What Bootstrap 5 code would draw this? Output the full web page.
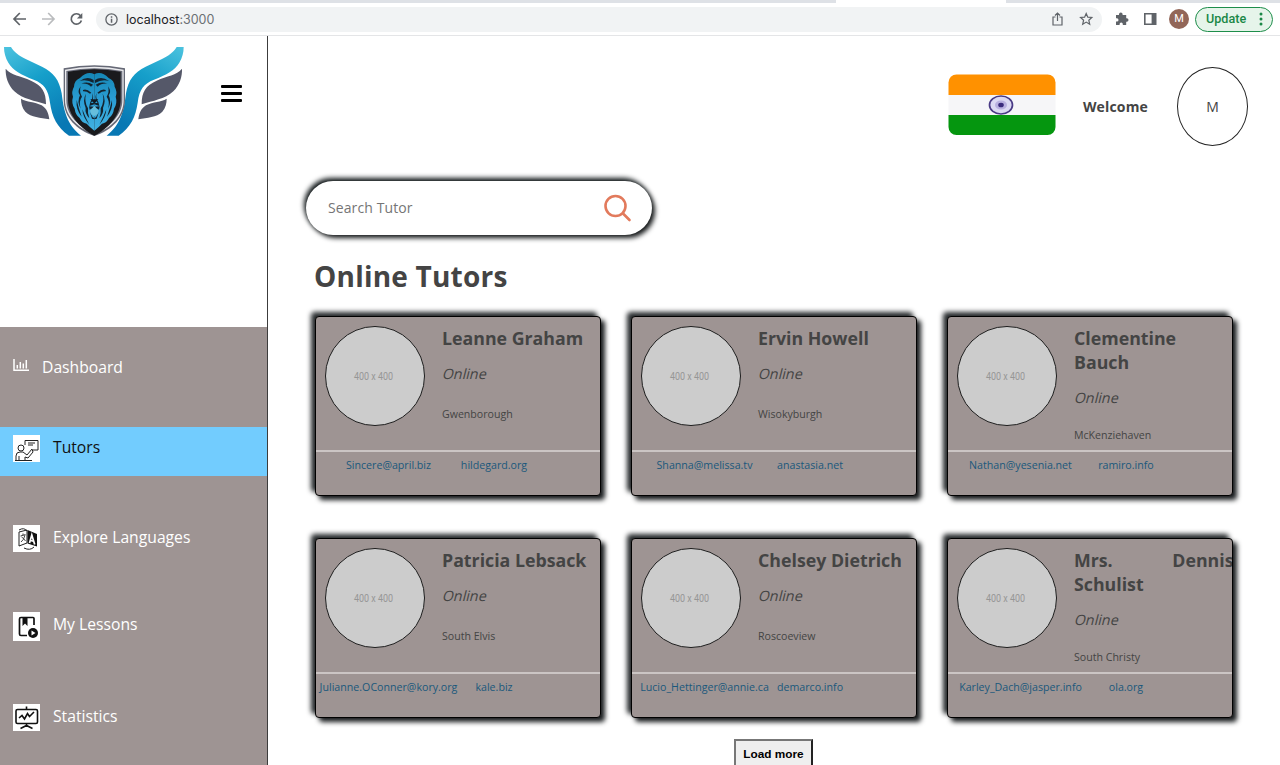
<!DOCTYPE html>
<html lang="en">
<head>
<meta charset="utf-8">
<title>Online Tutors</title>
<meta name="viewport" content="width=device-width, initial-scale=1">
<link href="https://cdn.jsdelivr.net/npm/bootstrap@5.3.0/dist/css/bootstrap.min.css" rel="stylesheet">
<style>
body{font-family:"Open Sans",sans-serif;color:#444;background:#fff;height:765px;overflow:hidden}
.tabstrip{height:3px;background:linear-gradient(90deg,#dee1e6 836px,#fff 836px,#fff 1006px,#dee1e6 1006px)}
.toolbar{height:33px;border-bottom:1px solid #e4e5e7;padding:0 7px 0 12px;color:#5f6368;font-family:Roboto,sans-serif}
.toolbar svg{flex:none}
.omni{width:1006px;height:25px;margin-left:9px;padding:0 8px 0 9px;border-radius:13px;background:#f1f3f4;font:12.5px/25px Inter,sans-serif;color:#6b6f73}
.omni b{font-weight:400;color:#202124}
.avatar{width:20px;height:20px;background:#926658;color:#fff;font-size:11px;line-height:20px;margin:0 6px 0 12px}
.update{width:78px;height:25px;border:1.4px solid #1e8e4b;border-radius:13px;background:#e6f4ea;color:#1b8847;font-size:12.6px;font-weight:500;padding:0 9px 0 10px}
.viewport{height:729px}
.side{width:268px;border-right:1px solid #3c3c3c;flex:none}
.side-top{height:291px;padding:11px 0 0 4px}
.burger{margin:38px 0 0 37px}
.menu{height:438px;background:#9e9493;color:#fff;font-size:15.7px}
.menu a{color:#fff;text-decoration:none;height:49px;padding:6px 0 0 13px;display:flex;align-items:flex-start}
.menu a.dash{padding-top:0;height:24px;margin:28px 0 48px}
.menu a.dash svg{margin:4px 13px 0 0}
.menu a.on{background:#72ccfe;color:#111;padding-top:8px}
.menu a span{margin-left:13px;line-height:24px}
.menu a.dash span{margin-left:0}
.sq{width:27px;height:27px;background:#fff;flex:none}
.langs{margin-top:41px;padding-top:8px!important}
.langs span,.on span{margin-top:-.5px}
.lessons{margin-top:40px}
.lessons .sq{height:29px}
.stats{margin-top:42px;padding-top:7px!important}
.top{height:143px;padding:31px 32px 0 0}
.flag{width:108px;height:63px;margin-top:6px}
.hello{font-size:14px;font-weight:700;margin:29px 29px 0 27px;line-height:22px;letter-spacing:.16px}
.initial{width:71px;height:79px;border:1px solid #222;border-radius:50%;font-size:14px}
.search{width:346px;height:54px;margin:2px 0 0 38px;padding:0 20px 0 22px;border-radius:27px;background:#fff;box-shadow:-2px -3px 5px #111719,3px 3px 5px #16191a}
.search input{border:0;outline:0;padding:0 0 2px;width:250px;font-size:14px;letter-spacing:.1px;background:none;color:#757575}
.search input::placeholder{color:#757575;opacity:1}
.heading{font-size:28px;letter-spacing:.22px;font-weight:700;line-height:36px;margin:23px 0 22px 46px}
.tutors{display:grid;grid-template-columns:repeat(3,286px);gap:42px 30px;margin-left:47px}
.tutor{height:180px;border:1px solid #000;border-radius:4px;background:#9e9493;box-shadow:-4px -4px 5px #25292b,4px 4px 5px #191c1e}
.tutor-body{height:133px;overflow:hidden}
.photo{width:100px;height:100px;border:1px solid #1d1d1d;border-radius:50%;background:#ccc;margin:9px 17.500px 0 8.500px;flex:none}
.info{width:159.500px;flex:none;padding-top:9px}
.who{font-size:17.750px;font-weight:700;line-height:24px;margin:0;text-align:justify}
.state{font-size:14.300px;line-height:20px;margin:14px 0 0;transform:skewX(-14deg);transform-origin:0 70%}
.city{font-size:10.600px;line-height:16px;margin:22px 0 0}
.two .city{margin-top:19px}
.links{border-top:2px solid #cbc5c4;display:grid;grid-template-columns:139px 72px;padding:5px 0 0 3px;text-align:center;font-size:10.650px;line-height:16px;color:#1a587c;white-space:nowrap}
.more{width:79px;height:32px;margin:21px 0 0 466px;border:2px solid #222;border-color:#777 #222 #222 #777;background:#efefef;font:bold 11.800px "Liberation Sans",sans-serif;color:#000;padding:0 0 2px;display:block}
</style>
</head>
<body>
<div class="tabstrip"></div>
<div class="toolbar d-flex align-items-center">
  <svg width="75" height="18" viewBox="0 0 75 18" fill="none" stroke="#5f6368" stroke-width="1.7"><path d="M14 9H2M7.800 3L2 9l5.800 6"/><path d="M30 9h12M36.200 3L42 9l-5.800 6" stroke="#babcbe"/><path d="M68.500 5.700A5.200 5.200 0 1 0 69.400 10.500"/><path d="M70.300 3v5.400h-5.400z" fill="#5f6368" stroke="none"/></svg>
  <div class="omni d-flex align-items-center">
    <svg class="me-2" width="13" height="13" viewBox="0 0 13 13"><circle cx="6.500" cy="6.500" r="5.600" fill="none" stroke="#5f6368" stroke-width="1.300"/><path d="M5.800 3.300h1.500v1.400H5.800zM5.800 5.800h1.500v4H5.800z" fill="#5f6368"/></svg>
    <span><b>localhost</b>:3000</span>
    <svg class="ms-auto" width="42" height="14" viewBox="0 0 42 14" fill="none" stroke="#5f6368" stroke-width="1.200"><path d="M3.500 5H1v8h9V5H7.500M5.500 9V1.200M3 3.500l2.500-2.500L8 3.500"/><path d="M34.200 1.500l1.600 3.700 4 .3-3 2.700.9 4-3.500-2.100-3.500 2.100.9-4-3-2.700 4-.3z"/></svg>
  </div>
  <svg class="ms-auto" width="42" height="16" viewBox="0 0 42 16"><path d="M1 4h3V3.300a1.800 1.800 0 0 1 3.600 0V4h3.600v3.300h.6a1.700 1.700 0 0 1 0 3.400h-.6V14H7.800v-1a1.600 1.600 0 0 0-3.200 0v1H1v-3.500h.9a1.600 1.600 0 0 0 0-3.200H1z" fill="#5f6368"/><path d="M29 2h12.500v12H29zm1.600 1.600v8.800h6V3.600z" fill="#5f6368" fill-rule="evenodd"/></svg>
  <div class="avatar rounded-circle text-center">M</div>
  <div class="update d-flex align-items-center justify-content-between">Update<svg width="4" height="14" fill="#1b8847"><circle cx="2" cy="2" r="1.500"/><circle cx="2" cy="7" r="1.500"/><circle cx="2" cy="12" r="1.500"/></svg></div>
</div>

<div class="viewport d-flex">
  <aside class="side">
    <div class="side-top d-flex align-items-start">
      <svg width="180" height="89" viewBox="12 141 540 267">
        <defs>
          <linearGradient id="wing" x1="0" y1="0" x2="0.500" y2="1"><stop offset="0" stop-color="#4cc3df"/><stop offset=".45" stop-color="#169fca"/><stop offset="1" stop-color="#0878b4"/></linearGradient>
          <linearGradient id="mane" x1="0" y1="0" x2="0" y2="1"><stop offset="0" stop-color="#1587b5"/><stop offset=".5" stop-color="#2c9fd6"/><stop offset="1" stop-color="#41b2e2"/></linearGradient>
          <g id="half">
            <path d="M12 141H33C43 157 57 167 77 177L126 200C161 217 178 240 185 280C191 329 200 375 243 407H207C171 382 156 350 150 308C145 268 132 251 101 239C63 224 39 211 25 188C16 173 12 158 12 141z" fill="url(#wing)"/>
            <path d="M17 206C33 226 62 227 93 242C126 257 138 275 138 313C104 302 69 298 43 274C24 255 16 230 17 206z" fill="#555869"/>
            <path d="M63 296C80 307 104 304 125 316C142 327 145 340 148 358C121 351 94 354 76 335C66 323 63 310 63 296z" fill="#555869"/>
          </g>
          <g id="lion">
            <path d="M283 223Q262 212 240 234Q223 241 222 260Q213 276 219 290Q213 309 224 326Q226 344 239 354Q246 369 260 371Q270 382 283 392z" fill="url(#mane)"/>
            <path d="M281 240Q262 226 239 243Q259 236 281 249zM279 254Q261 242 244 251Q262 249 273 260zM242 259Q230 276 240 286Q230 305 242 326Q235 305 246 290Q237 276 242 259zM249 270Q259 265 274 278L270 281Q259 273 249 274zM258 281Q247 300 257 324Q254 340 268 355Q262 337 264 325Q252 305 258 281zM230 300Q227 329 245 350Q236 326 230 300zM247 328Q248 351 268 374Q255 350 247 328zM276 279Q280 295 271 306L268 318 283 313V309L273 309Q284 295 276 279zM267 319L283 320V325Q275 323 269 329zM270 337L278 352 283 354V358L276 356z" fill="#14232f"/>
          </g>
        </defs>
        <use href="#half"/><use href="#half" transform="matrix(-1 0 0 1 563 0)"/>
        <path d="M191 205Q283 186 375 205V300C375 351 337 390 283 408C229 390 191 351 191 300z" fill="#666976"/>
        <path d="M195 209Q283 191 371 209V300C371 348 335 384 283 402C231 384 195 348 195 300z" fill="#ececef"/>
        <path d="M199 213Q283 196 367 213V300C367 345 332 380 283 397C234 380 199 345 199 300z" fill="#686b78"/>
        <path d="M204 215Q283 200 362 215V300C362 342 329 384 283 407C237 384 204 342 204 300z" fill="#191a1d"/>
        <use href="#lion"/><use href="#lion" transform="matrix(-1 0 0 1 566 0)"/>
        <path d="M271 298H295L283 311z" fill="#101a22"/>
        <path d="M283 317L296 332 292 343 283 348 274 343 270 332z" fill="#66bedc"/>
      </svg>
      <svg class="burger" width="21" height="18" fill="#000"><rect y="0" width="21" height="3" rx="1"/><rect y="7" width="21" height="3" rx="1"/><rect y="14" width="21" height="3" rx="1"/></svg>
    </div>
    <nav class="menu overflow-hidden">
      <a class="dash" href="#"><svg width="16" height="13" viewBox="0 0 16 13" fill="none" stroke="#fff" stroke-width="1.500"><path d="M1 0v11.300h15M4.300 9.500V6M7.300 9.500V3M10.300 9.500V4.500M13.300 9.500V1"/></svg><span>Dashboard</span></a>
      <a class="on" href="#"><svg class="sq" viewBox="0 0 27 27" fill="none" stroke="#222" stroke-width="1"><circle cx="8" cy="13" r="3"/><path d="M3 25v-4q0-4 4-4h3l4 3 5-6 1 3-5 6-3-1v4M6 21v4M2 25.500h17M12 10V5.500h13V15h-5M15 8h7M15 10h5"/></svg><span>Tutors</span></a>
      <a class="langs" href="#"><svg class="sq" viewBox="0 0 27 27"><path d="M14.500 5L24 9v12.500l-9.500-3z" fill="#111"/><path d="M6 7l8-2v13l-8 3zM6 5q5-3 8 1M11 23q6 3 10-1" fill="none" stroke="#222"/><path d="M7.500 11l5-1.500M10 8.500v2M8 17q3-2 4-7M8.500 12q2 1 4 4" fill="none" stroke="#333" stroke-width=".9"/><path d="M16.500 18l2.300-8 2.900 9.500M17.500 15.500l3 .8" fill="none" stroke="#fff" stroke-width="1.700"/></svg><span>Explore Languages</span></a>
      <a class="lessons" href="#"><svg class="sq" viewBox="0 0 27 29"><path d="M21 13V6.500Q21 5.500 20 5.500H8Q6.500 5.500 6.500 7v15q0 1.500 1.500 1.500h6" fill="none" stroke="#111" stroke-width="1.700"/><path d="M9.500 6h5v8L12 11.500 9.500 14z" fill="#111"/><circle cx="20" cy="21" r="5" fill="#111"/><path d="M18.500 18.500v5l4-2.500z" fill="#fff"/></svg><span>My Lessons</span></a>
      <a class="stats" href="#"><svg class="sq" viewBox="0 0 27 27" fill="none" stroke="#111" stroke-width="1.600"><rect x="3" y="5.500" width="21.500" height="14" rx="1.500"/><path d="M13.500 2.500v3M13.500 20v3M7.500 24.500l6-3 6 3M6 14l3-2.500 2.500 3.500 3-5.500 2 3 4.500-4.500"/></svg><span>Statistics</span></a>
    </nav>
  </aside>

  <main class="flex-grow-1">
    <div class="top d-flex justify-content-end align-items-start">
      <svg class="flag" viewBox="0 0 108 63"><defs><clipPath id="fl"><rect x=".5" y="1.500" width="107" height="60.500" rx="8"/></clipPath></defs><g clip-path="url(#fl)"><path fill="#ff9100" d="M0 0h108v22H0z"/><path fill="#f6f6f8" d="M0 22h108v20H0z"/><path fill="#05960f" d="M0 42h108v21H0z"/></g><ellipse cx="53" cy="32" rx="11.500" ry="9" fill="#dcd9f3" stroke="#493a85" stroke-width="1.700"/><ellipse cx="53" cy="32" rx="6" ry="4.500" fill="#b9b0e0"/><ellipse cx="53" cy="32" rx="2.800" ry="2.300" fill="#3a2a7c"/></svg>
      <div class="hello">Welcome</div>
      <div class="initial d-flex align-items-center justify-content-center">M</div>
    </div>
    <div class="search d-flex align-items-center justify-content-between">
      <input placeholder="Search Tutor" aria-label="Search Tutor">
      <svg width="29" height="28" viewBox="0 0 29 28" fill="none" stroke="#e27a5c" stroke-width="2.600" stroke-linecap="round"><circle cx="12.500" cy="12" r="10"/><path d="M20 19.500l6.500 6.500"/></svg>
    </div>
    <h1 class="heading">Online Tutors</h1>
    <section class="tutors" id="tutors"></section>
    <button class="more">Load more</button>
  </main>
</div>
<script src="https://cdn.jsdelivr.net/npm/bootstrap@5.3.0/dist/js/bootstrap.bundle.min.js"></script>
<script>
const tutors=[
["Leanne Graham","Gwenborough","Sincere@april.biz","hildegard.org"],
["Ervin Howell","Wisokyburgh","Shanna@melissa.tv","anastasia.net"],
["Clementine Bauch","McKenziehaven","Nathan@yesenia.net","ramiro.info",1],
["Patricia Lebsack","South Elvis","Julianne.OConner@kory.org","kale.biz"],
["Chelsey Dietrich","Roscoeview","Lucio_Hettinger@annie.ca","demarco.info"],
["Mrs. Dennis Schulist","South Christy","Karley_Dach@jasper.info","ola.org",1]];
document.getElementById("tutors").innerHTML=tutors.map(t=>`<article class="tutor">
<div class="tutor-body d-flex align-items-start"><svg class="photo" viewBox="0 0 98 98"><text x="28" y="53" font-family="Roboto,sans-serif" font-size="11" fill="#969696" textLength="39" lengthAdjust="spacingAndGlyphs">400 x 400</text></svg>
<div class="info ${t[4]?"two":""}"><h2 class="who">${t[0]}</h2><p class="state">Online</p><p class="city">${t[1]}</p></div></div>
<div class="links"><span>${t[2]}</span><span>${t[3]}</span></div></article>`).join("");
</script>
</body>
</html>
